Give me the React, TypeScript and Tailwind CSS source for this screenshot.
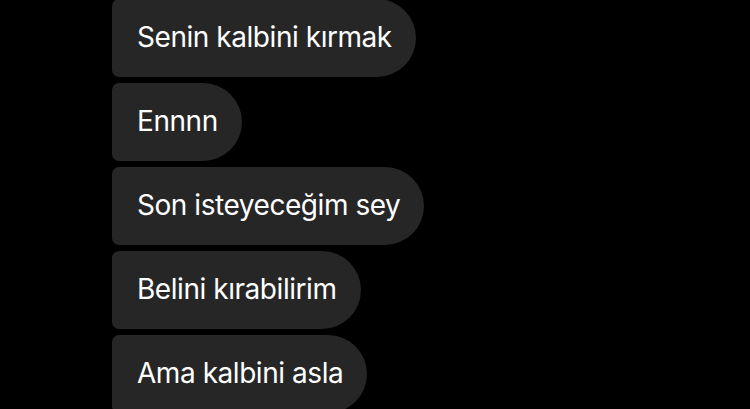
const messages = [
  "Senin kalbini kırmak",
  "Ennnn",
  "Son isteyeceğim sey",
  "Belini kırabilirim",
  "Ama kalbini asla",
];

export default function App() {
  return (
    <div className="w-[750px] h-[409px] overflow-hidden bg-black">
      <div className="flex flex-col items-start gap-[6px] pl-[112px] -mt-px">
        {messages.map((m, i) => (
          <div
            key={i}
            className="h-[78px] flex items-center pl-[25px] pr-[24px] pb-[3px] bg-[#262626] text-white text-[28px] tracking-[-0.45px] rounded-l-[7px] rounded-r-[39px] whitespace-nowrap"
            style={{ fontFamily: 'Inter, "Noto Sans", sans-serif' }}
          >
            {m}
          </div>
        ))}
      </div>
    </div>
  );
}
